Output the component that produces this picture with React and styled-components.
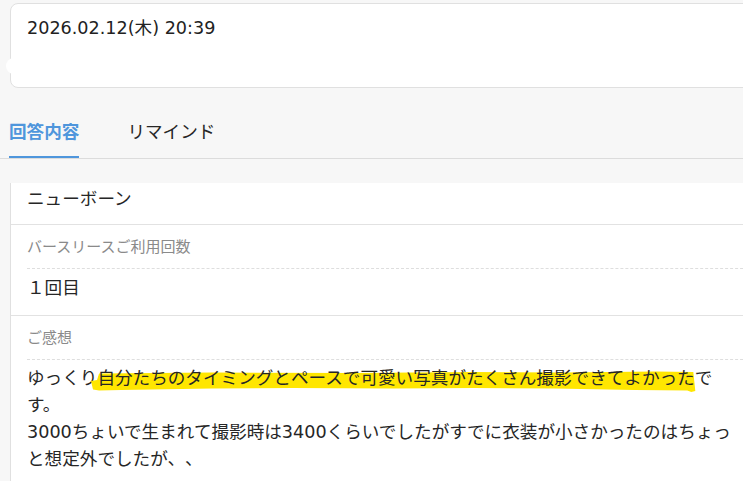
import React from "react";
import styled, { createGlobalStyle } from "styled-components";

const GlobalStyle = createGlobalStyle`
  html, body {
    margin: 0;
    padding: 0;
    background: #f7f7f7;
    overflow: hidden;
  }
  body {
    font-family: "DejaVu Sans", "Noto Sans CJK JP", sans-serif;
    color: #262626;
    text-spacing-trim: space-all;
  }
`;

const Page = styled.div`
  width: 743px;
  height: 481px;
  overflow: hidden;
  background: #f7f7f7;
  padding-top: 3px;
  box-sizing: border-box;
`;

const Top = styled.div`
  position: relative;
  padding-left: 10px;
`;

const DateCard = styled.div`
  background: #fff;
  border: 1px solid #e0e0e0;
  border-radius: 8px;
  height: 85px;
  box-sizing: border-box;
  margin-right: -30px;
  padding: 11px 16px 10px;
  font-size: 17.6px;
  line-height: 26px;
  color: #222;
`;

const Blob = styled.div`
  position: absolute;
  left: 6px;
  top: 55px;
  width: 44px;
  height: 16px;
  border-radius: 8px;
  background: #fff;
`;

const TabBar = styled.div`
  display: flex;
  gap: 48px;
  margin-top: 13px;
  padding-left: 9px;
  border-bottom: 1px solid #dcdcdc;
  font-family: "Noto Sans CJK JP", sans-serif;
`;

const Tab = styled.div`
  font-size: 17.6px;
  line-height: 26px;
  padding: 17px 0 12px;
  font-weight: ${(p) => (p.$active ? 700 : 400)};
  color: ${(p) => (p.$active ? "#4f96dc" : "#262626")};
  border-bottom: 2px solid ${(p) => (p.$active ? "#4f96dc" : "transparent")};
`;

const Card = styled.div`
  margin: 24px -30px 0 10px;
  padding-bottom: 60px;
  background: #fff;
  border-left: 1px solid #e0e0e0;
`;

const Row = styled.div`
  padding: ${(p) => p.$pt}px 0 ${(p) => p.$pb}px 16px;
  border-bottom: ${(p) => (p.$last ? "none" : "1px solid #e2e2e2")};
`;

const Label = styled.div`
  font-family: "Noto Sans CJK JP", sans-serif;
  font-size: 15px;
  line-height: 22px;
  color: #8a8a8a;
  padding-bottom: 11px;
  border-bottom: 1px dashed #dedede;
`;

const Value = styled.div`
  font-size: 17.6px;
  line-height: 27.3px;
  color: #262626;
  padding-top: ${(p) => p.$pt || 0}px;
  white-space: nowrap;
  text-spacing-trim: space-all;
`;

const Mark = styled.span`
  position: relative;
  z-index: 0;
`;

const MarkStroke = styled.svg`
  position: absolute;
  left: -6px;
  top: 3px;
  height: 21px;
  width: calc(100% + 7px);
  z-index: -1;
`;

function Highlight({ children }) {
  return (
    <Mark>
      <MarkStroke viewBox="0 0 600 21" preserveAspectRatio="none">
        <path
          d="M0 10 L6 9 L8 2.5 L120 1.5 L260 2 L380 1 L470 1.5 L560 0.5 L598 1 L600 20 L596 21 L592 19.5 L540 19 L460 17.5 L380 17 L300 17.5 L200 17 L120 17.5 L30 19 L8 19.5 L2 18.5 Z"
          fill="#ffe600"
        />
      </MarkStroke>
      {children}
    </Mark>
  );
}

export default function App() {
  return (
    <>
      <GlobalStyle />
      <Page>
        <Top>
          <DateCard>2026.02.12(木) 20:39</DateCard>
          <Blob />
        </Top>
        <TabBar>
          <Tab $active>回答内容</Tab>
          <Tab>リマインド</Tab>
        </TabBar>
        <Card>
          <Row $pt={3} $pb={11}>
            <Value>ニューボーン</Value>
          </Row>
          <Row $pt={10} $pb={12}>
            <Label>バースリースご利用回数</Label>
            <Value $pt={6}>１回目</Value>
          </Row>
          <Row $pt={10} $pb={0} $last>
            <Label>ご感想</Label>
            <Value $pt={5}>
              ゆっくり<Highlight>自分たちのタイミングとペースで可愛い写真がたくさん撮影できてよかった</Highlight>で
              <br />
              す。
              <br />
              3000ちょいで生まれて撮影時は3400くらいでしたがすでに衣装が小さかったのはちょっ
              <br />
              と想定外でしたが、、
            </Value>
          </Row>
        </Card>
      </Page>
    </>
  );
}
